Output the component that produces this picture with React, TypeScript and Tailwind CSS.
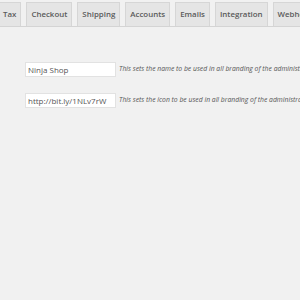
import React from 'react';

const tabs = ['Tax', 'Checkout', 'Shipping', 'Accounts', 'Emails', 'Integration', 'Webhooks'];

export default function App() {
  return (
    <div className="w-[300px] h-[300px] overflow-hidden bg-[#f1f1f1] font-['Open_Sans',sans-serif]">
      <div className="flex items-end gap-[5px] h-[27px] border-b border-[#d4d4d4] -ml-[2px] whitespace-nowrap">
        {tabs.map((t) => (
          <div
            key={t}
            className="shrink-0 h-[24px] flex items-center px-[4px] bg-[#e5e5e5] border border-b-0 border-[#d6d6d6] text-[7.9px] font-semibold text-[#5a5a5a]"
          >
            {t}
          </div>
        ))}
      </div>

      <div className="pl-[25px] pt-[35px] flex flex-col gap-[16px]">
        <div className="flex items-center gap-[3px] whitespace-nowrap">
          <div className="shrink-0 w-[91px] h-[15px] bg-white border border-[#e2e2e2] flex items-center px-[2px] text-[8px] text-[#555]">
            Ninja Shop
          </div>
          <span className="italic text-[6.8px] text-[#555]">
            This sets the name to be used in all branding of the administration area
          </span>
        </div>
        <div className="flex items-center gap-[3px] whitespace-nowrap">
          <div className="shrink-0 w-[91px] h-[15px] bg-white border border-[#e2e2e2] flex items-center px-[2px] text-[8px] text-[#555]">
            http://bit.ly/1NLv7rW
          </div>
          <span className="italic text-[6.8px] text-[#555]">
            This sets the icon to be used in all branding of the administration area
          </span>
        </div>
      </div>
    </div>
  );
}
